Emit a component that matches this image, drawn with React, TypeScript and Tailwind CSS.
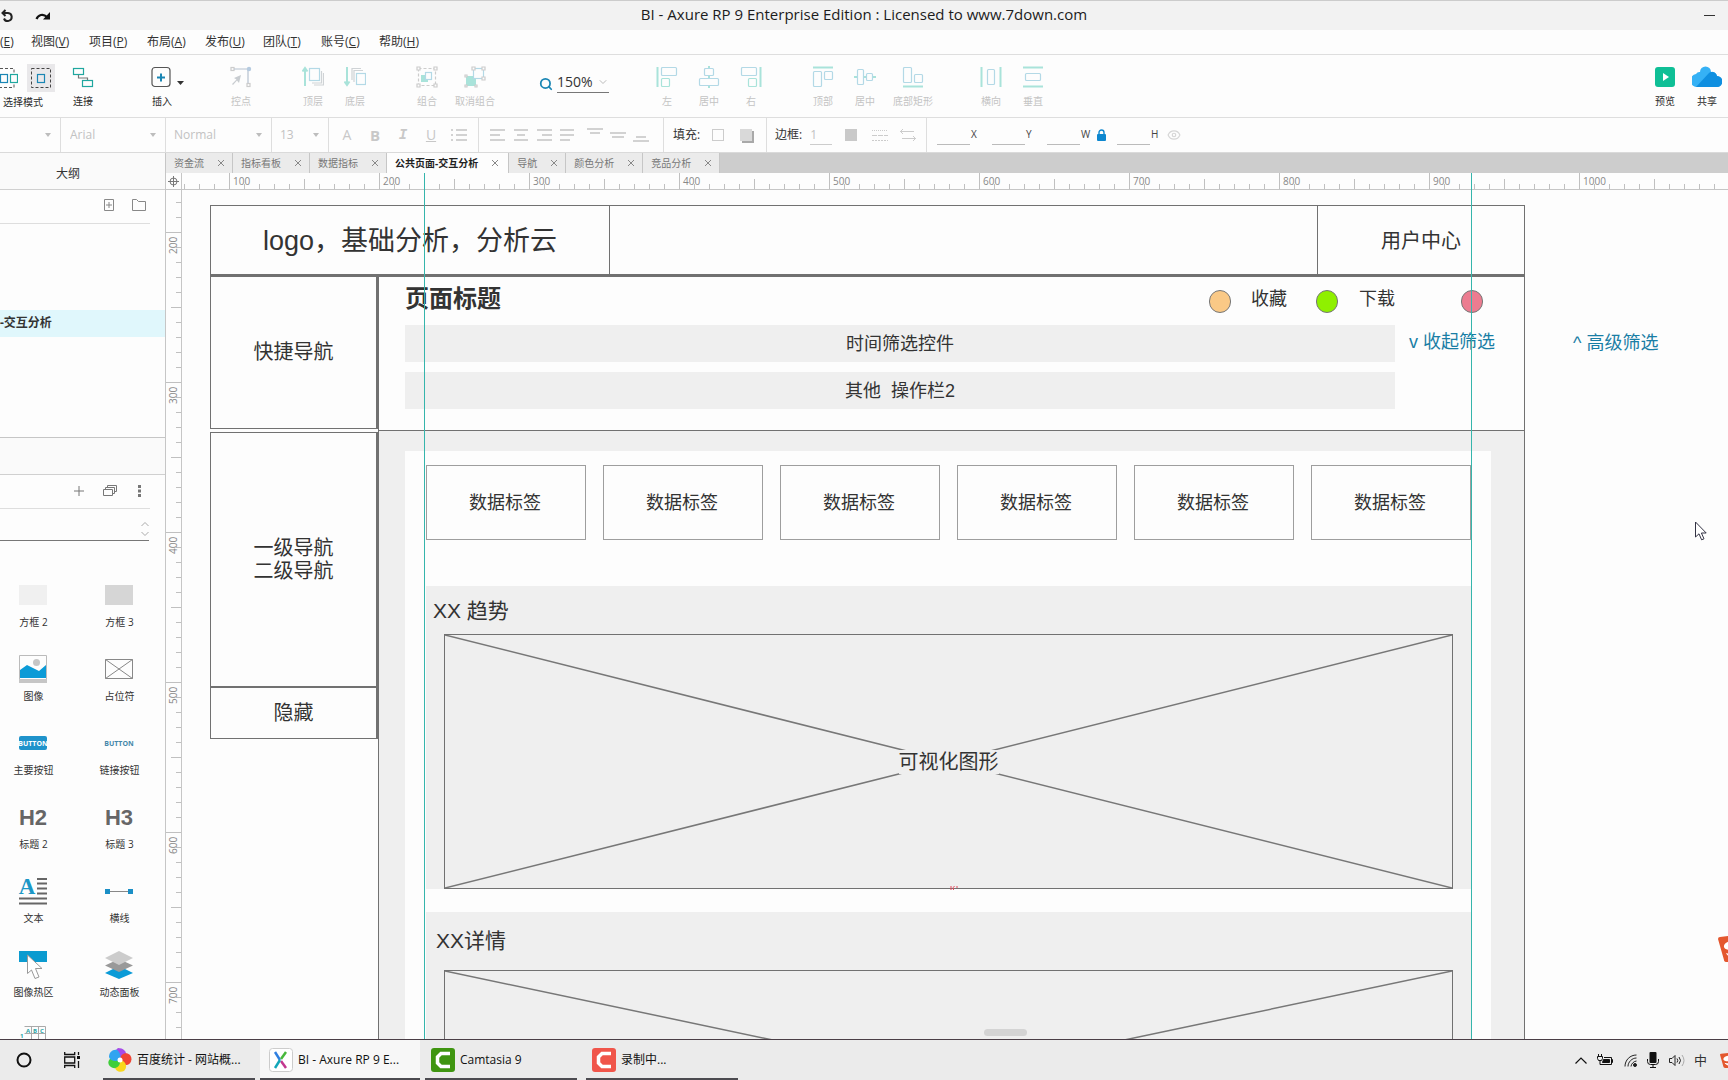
import React from 'react';
import { ChevronDown, ChevronUp, Eye, Search } from 'lucide-react';

const TEAL = '#1fa79f';
const BLUE = '#1a86b4';
const SOFT_TEAL = '#a9e3da';
const SOFT_BLUE = '#b3d9e6';

const menus = [
  ['视图', 'V'],
  ['项目', 'P'],
  ['布局', 'A'],
  ['发布', 'U'],
  ['团队', 'T'],
  ['账号', 'C'],
  ['帮助', 'H'],
];

const tabs = ['资金流', '指标看板', '数据指标', '公共页面-交互分析', '导航', '颜色分析', '竞品分析'];

/* ---------- title and menu ---------- */

const TitleBar: React.FC = () => (
  <header className="relative flex h-[30px] shrink-0 items-center justify-between border-t border-[#cccccc] bg-[#f2f2f2] pr-3">
    <div className="flex items-center gap-[21px]">
      <button aria-label="撤销">
        <svg width="14" height="14" viewBox="0 0 14 14" fill="none" stroke="#222" strokeWidth="2">
          <path d="M3 4h5a4 4 0 1 1-4 5.500M5.500 1 2.500 4l3 3" />
        </svg>
      </button>
      <button aria-label="重做">
        <svg width="16" height="12" viewBox="0 0 16 12">
          <path d="M1.500 9C3 5 8 3 12 7" fill="none" stroke="#111" strokeWidth="2.200" />
          <path d="M15 2v7.500H8z" fill="#111" />
        </svg>
      </button>
    </div>
    <h1 className="pointer-events-none absolute inset-x-0 top-[3px] text-center text-[15px] leading-5 text-[#1c1c1c]">
      BI - Axure RP 9 Enterprise Edition : Licensed to www.7down.com
    </h1>
    <button aria-label="最小化" className="h-3 w-3">
      <span className="block h-px w-[11px] bg-[#333]" />
    </button>
  </header>
);

const MenuBar: React.FC = () => (
  <nav className="flex h-[25px] shrink-0 items-center border-b border-[#dedede] text-[12px] leading-4 text-[#333]">
    <button className="w-[31px] text-left">
      (<u>E</u>)
    </button>
    {menus.map(([name, key]) => (
      <button key={key} className="w-[58px] whitespace-nowrap text-left">
        {name}(<u>{key}</u>)
      </button>
    ))}
  </nav>
);

/* ---------- toolbar ---------- */

interface ToolProps {
  label: string;
  wide?: boolean;
  muted?: boolean;
  children: React.ReactNode;
}

const Tool: React.FC<ToolProps> = ({ label, wide, muted, children }) => (
  <button
    className={`relative flex shrink-0 flex-col items-center gap-[5px] text-[10px] leading-4 ${wide ? 'w-[54px]' : 'w-[42px]'} ${
      muted ? 'text-[#c4c4c4]' : 'text-[#2b2b2b]'
    }`}
  >
    <svg width="22" height="22" viewBox="0 0 22 22" fill="none" strokeWidth="1.200">
      {children}
    </svg>
    <span className="whitespace-nowrap">{label}</span>
  </button>
);

const Toolbar: React.FC = () => (
  <div className="flex h-[63px] shrink-0 items-start border-b border-[#dedede] pt-[11px] text-[10px]">
    <div className="flex w-[62px] shrink-0 flex-col gap-[2px] leading-4 text-[#2b2b2b]">
      <div className="-mt-[2px] flex gap-[9px]">
        <button aria-label="相交选中" className="h-7 w-[18px]">
          <svg width="18" height="28" viewBox="0 0 18 28" fill="none">
            <path d="M0 4.500h14v19H0" stroke="#555" strokeDasharray="3 2" />
            <rect x="0.500" y="10.500" width="7" height="8" stroke={BLUE} strokeWidth="1.200" />
            <rect x="10.500" y="10.500" width="7" height="8" stroke={TEAL} strokeWidth="1.200" fill="#fdfdfd" />
          </svg>
        </button>
        <button aria-label="包含选中" className="h-7 w-7 bg-[#e9e8ea]">
          <svg width="28" height="28" viewBox="0 0 28 28" fill="none">
            <rect x="4.500" y="4.500" width="19" height="19" stroke="#444" strokeDasharray="3 2" />
            <rect x="10.500" y="10.500" width="7" height="8" stroke={BLUE} strokeWidth="1.200" />
          </svg>
        </button>
      </div>
      <span className="pl-[3px]">选择模式</span>
    </div>
    <Tool label="连接">
      <rect x="1.500" y="2.500" width="10" height="6" stroke={TEAL} />
      <rect x="10.500" y="14.500" width="10" height="6" stroke={TEAL} />
      <path d="M6.500 9v3h9v2" stroke="#777" />
    </Tool>
    <div className="relative ml-[37px] mr-[37px]">
      <Tool label="插入">
        <rect x="1" y="1.500" width="18" height="19" rx="3" stroke="#555" />
        <path d="M10 7.500v8M6 11.500h8" stroke={BLUE} strokeWidth="2" />
      </Tool>
      <svg width="7" height="4" viewBox="0 0 7 4" className="absolute left-9 top-[15px]">
        <path d="M0 0h7L3.500 4z" fill="#333" />
      </svg>
    </div>
    <div className="flex gap-[30px]">
      <Tool label="控点" muted>
        <rect x="1" y="1.500" width="3" height="3" stroke="#ccc" />
        <path d="M4 3h14v15" stroke="#b6c2d0" />
        <circle cx="19" cy="3" r="2.200" fill="#b6cbe0" />
        <rect x="17" y="17.500" width="3" height="3" stroke="#ccc" />
        <path d="m11 9-2 8-2-2.500-4 4.500-1-1 4.500-4.500L4 12z" fill="#c8ccd0" />
      </Tool>
      <div className="flex">
        <Tool label="顶层" muted>
          <path d="M3 20V3M0.500 5.500 3 2l2.500 3.500" stroke={SOFT_TEAL} strokeWidth="2" />
          <rect x="7.500" y="2.500" width="10" height="12" stroke={SOFT_BLUE} />
          <path d="M19.500 5v12H10M21.500 7v12H12" stroke="#cfd3d6" />
        </Tool>
        <Tool label="底层" muted>
          <path d="M3 1v17M0.500 15.500 3 19l2.500-3.500" stroke={SOFT_TEAL} strokeWidth="2" />
          <path d="M8 14V2.500h9M10 16V4.500h9" stroke="#cfd3d6" />
          <rect x="12.500" y="7.500" width="9" height="11" stroke={SOFT_BLUE} />
        </Tool>
      </div>
      <div className="flex">
        <Tool label="组合" muted>
          <rect x="2.500" y="2.500" width="17" height="17" stroke="#ccc" strokeDasharray="3 2" />
          <rect x="5" y="9" width="7" height="7" fill={SOFT_TEAL} />
          <rect x="9.500" y="6.500" width="6" height="7" stroke={SOFT_BLUE} fill="#fdfdfd" />
          <path d="M1 1h3v3H1zM18 1h3v3h-3zM1 18h3v3H1zM18 18h3v3h-3z" stroke="#ccc" fill="#fdfdfd" />
        </Tool>
        <Tool label="取消组合" muted wide>
          <rect x="2" y="10" width="10" height="10" fill={SOFT_TEAL} />
          <rect x="9.500" y="2.500" width="10" height="10" stroke={SOFT_BLUE} fill="#fdfdfd" />
          <path d="M8 1h3v3H8zM18 1h3v3h-3zM18 11h3v3h-3zM1 9h2v2H1zM1 19h2v2H1zM11 19h2v2h-2z" stroke="#ccc" fill="#fdfdfd" />
        </Tool>
      </div>
    </div>
    <div className="mx-[37px] flex h-[27px] shrink-0 items-end">
      <Search size={14} strokeWidth={3} color={BLUE} className="mb-[2px] mr-1" />
      <label className="flex w-[52px] items-center border-b border-[#777]">
        <input aria-label="缩放" defaultValue="150%" className="w-10 bg-transparent text-[14px] leading-5 text-[#333] outline-none" />
        <ChevronDown size={12} color="#bbb" />
      </label>
    </div>
    <div className="flex gap-[30px]">
      <div className="flex">
        <Tool label="左" muted>
          <path d="M1.500 1v20" stroke={SOFT_TEAL} strokeWidth="2" />
          <rect x="5.500" y="1.500" width="15" height="8" rx="1" stroke={SOFT_BLUE} />
          <rect x="5.500" y="12.500" width="8" height="8" rx="1" stroke={SOFT_TEAL} />
        </Tool>
        <Tool label="居中" muted>
          <path d="M11 0v3M11 10v2M11 19v3" stroke={SOFT_TEAL} strokeWidth="2" />
          <rect x="6.500" y="2.500" width="9" height="7" rx="1" stroke={SOFT_BLUE} />
          <rect x="1.500" y="12.500" width="19" height="7" rx="1" stroke={SOFT_BLUE} />
        </Tool>
        <Tool label="右" muted>
          <path d="M20.500 1v20" stroke={SOFT_TEAL} strokeWidth="2" />
          <rect x="1.500" y="1.500" width="15" height="8" rx="1" stroke={SOFT_BLUE} />
          <rect x="8.500" y="12.500" width="8" height="8" rx="1" stroke={SOFT_TEAL} />
        </Tool>
      </div>
      <div className="flex">
        <Tool label="顶部" muted>
          <path d="M1 1.500h20" stroke={SOFT_TEAL} strokeWidth="2" />
          <rect x="1.500" y="5.500" width="8" height="15" rx="1" stroke={SOFT_BLUE} />
          <rect x="12.500" y="5.500" width="8" height="8" rx="1" stroke={SOFT_BLUE} />
        </Tool>
        <Tool label="居中" muted>
          <path d="M0 11h3M10 11h2M19 11h3" stroke={SOFT_TEAL} strokeWidth="2" />
          <rect x="3.500" y="3.500" width="6" height="15" rx="1" stroke={SOFT_BLUE} />
          <rect x="12.500" y="7.500" width="6" height="7" rx="1" stroke={SOFT_BLUE} />
        </Tool>
        <Tool label="底部矩形" muted wide>
          <path d="M1 20.500h20" stroke={SOFT_TEAL} strokeWidth="2" />
          <rect x="1.500" y="1.500" width="8" height="15" rx="1" stroke={SOFT_BLUE} />
          <rect x="12.500" y="8.500" width="8" height="8" rx="1" stroke={SOFT_BLUE} />
        </Tool>
      </div>
      <div className="flex">
        <Tool label="横向" muted>
          <path d="M1.500 1v20M20.500 1v20" stroke={SOFT_TEAL} strokeWidth="2" />
          <rect x="7.500" y="3.500" width="7" height="15" rx="1" stroke={SOFT_BLUE} />
        </Tool>
        <Tool label="垂直" muted>
          <path d="M1 1.500h20M1 20.500h20" stroke={SOFT_TEAL} strokeWidth="2" />
          <rect x="3.500" y="7.500" width="15" height="7" rx="1" stroke={SOFT_BLUE} />
        </Tool>
      </div>
    </div>
    <div className="ml-auto flex">
      <Tool label="预览">
        <rect x="1" y="1" width="20" height="20" rx="3" fill="#0fbf96" />
        <path d="M9 7v8l6-4z" fill="#fff" />
      </Tool>
      <button className="flex w-[42px] flex-col items-center gap-[5px] leading-4 text-[#2b2b2b]">
        <svg width="30" height="22" viewBox="0 0 30 22">
          <path d="M6 21a6 6 0 0 1-2-13 4 4 0 0 1 4-2 5.500 5.500 0 0 1 11 0 5 5 0 0 1 6 4 5.500 5.500 0 0 1-1 11z" fill="#35b1f5" />
          <path d="M4 21 17 7a5 5 0 0 1 8 3 5.500 5.500 0 0 1 0 11z" fill="#0f8fe0" />
        </svg>
        <span>共享</span>
      </button>
    </div>
  </div>
);

/* ---------- format bar ---------- */

interface PickerProps {
  name: string;
  value: string;
  className: string;
}

const Picker: React.FC<PickerProps> = ({ name, value, className }) => (
  <label className={`flex h-full shrink-0 items-center justify-between border-r border-[#dedede] pr-[9px] ${className}`}>
    <select aria-label={name} className="min-w-0 flex-1 appearance-none bg-transparent text-[12px] text-[#c2c2c2] outline-none">
      <option>{value}</option>
    </select>
    <svg width="6" height="4" viewBox="0 0 6 4">
      <path d="M0 0h6L3 4z" fill="#bdbdbd" />
    </svg>
  </label>
);

const Bars: React.FC<{ name: string; d: string }> = ({ name, d }) => (
  <button aria-label={name}>
    <svg width="16" height="16" viewBox="0 0 16 16" stroke="#d2d2d2" strokeWidth="2" fill="none" className="block">
      <path d={d} />
    </svg>
  </button>
);

const Coord: React.FC<{ name: string }> = ({ name }) => (
  <label className="flex items-end text-[10px] leading-4 text-[#444]">
    <input className="mr-[1px] h-5 w-[33px] border-b border-[#bbb] bg-transparent outline-none" />
    <span className="w-[10px] pb-[3px]">{name}</span>
  </label>
);

const FormatBar: React.FC = () => (
  <div className="flex h-[35px] shrink-0 items-center border-b border-[#dadada]">
    <Picker name="样式" value="" className="w-[61px]" />
    <Picker name="字体" value="Arial" className="w-[105px] pl-[9px]" />
    <Picker name="字型" value="Normal" className="w-[106px] pl-2" />
    <Picker name="字号" value="13" className="w-[57px] pl-2" />
    <div className="flex h-full w-[150px] shrink-0 items-center justify-between border-r border-[#dedede] pl-[10px] pr-[11px] text-[14px] leading-4 text-[#c8c8c8]">
      <button className="w-4">A</button>
      <button className="w-4 text-[15px] font-bold">B</button>
      <button className="w-4 font-['Liberation_Mono',monospace] font-bold italic">I</button>
      <button className="w-4 underline">U</button>
      <Bars name="列表" d="M0 3h2M5 3h11M0 8h2M5 8h11M0 13h2M5 13h11" />
    </div>
    <div className="flex h-full w-[185px] shrink-0 items-center gap-[7px] border-r border-[#dedede] pl-[11px]">
      <Bars name="左对齐" d="M0 3h15M0 8h10M0 13h15" />
      <Bars name="居中对齐" d="M1 3h14M4 8h8M1 13h14" />
      <Bars name="右对齐" d="M1 3h15M6 8h10M1 13h15" />
      <Bars name="两端对齐" d="M1 3h14M1 8h14M1 13h10" />
      <div className="ml-[5px] flex gap-[7px]">
        <Bars name="顶端" d="M0 2h16M3 6h10" />
        <Bars name="中部" d="M0 6h16M2 10h12" />
        <Bars name="底端" d="M3 10h10M0 14h16" />
      </div>
    </div>
    <div className="flex h-full w-[103px] shrink-0 items-center border-r border-[#dedede] pl-[9px] text-[12px] leading-4 text-[#333]">
      填充:
      <button aria-label="填充颜色" className="ml-3 h-3 w-3 border border-[#ccc]" />
      <button aria-label="阴影" className="ml-4 h-3 w-3 bg-[#d9d9d9] shadow-[2px_2px_0_#a9a9a9]" />
    </div>
    <div className="flex h-full w-[160px] shrink-0 items-center border-r border-[#dedede] pl-2 text-[12px] leading-4 text-[#333]">
      边框:
      <input aria-label="线宽" defaultValue="1" className="ml-2 h-5 w-[22px] border-b border-[#ccc] bg-transparent text-[#c2c2c2] outline-none" />
      <button aria-label="线条颜色" className="ml-[13px] h-3 w-3 bg-[#c9c9c9]" />
      <button aria-label="线型" className="ml-[15px]">
        <svg width="16" height="12" viewBox="0 0 16 12" stroke="#ccc" fill="none">
          <path d="M0 1.500h16" strokeDasharray="1 1" />
          <path d="M0 6.500h16" strokeDasharray="5 1" />
          <path d="M0 11.500h16" strokeDasharray="2 1" />
        </svg>
      </button>
      <button aria-label="箭头" className="ml-3">
        <svg width="16" height="12" viewBox="0 0 16 12" stroke="#ccc" fill="none">
          <path d="M0 2.500h14M3 0 0.500 2.500l2.500 2.500M2 9.500h14M13 7l2.500 2.500L13 12" />
        </svg>
      </button>
    </div>
    <div className="flex shrink-0 items-center gap-[11px] pl-[10px]">
      <Coord name="X" />
      <Coord name="Y" />
      <div className="flex items-center gap-[6px]">
        <Coord name="W" />
        <button aria-label="锁定比例">
          <svg width="9" height="12" viewBox="0 0 9 12" className="block">
            <path d="M2 5V3.500a2.500 2.500 0 0 1 5 0V5" fill="none" stroke="#0d87cf" strokeWidth="1.400" />
            <rect y="5" width="9" height="7" rx="1" fill="#0d87cf" />
          </svg>
        </button>
      </div>
      <div className="flex items-center gap-[6px]">
        <Coord name="H" />
        <Eye size={14} color="#d6d6d6" />
      </div>
    </div>
  </div>
);

/* ---------- left panel ---------- */

const LibItem: React.FC<{ label: string; children: React.ReactNode }> = ({ label, children }) => (
  <li className="flex h-[74px] flex-col items-center gap-[5px]">
    <svg width="28" height="28" viewBox="0 0 28 28" fill="none" className="shrink-0 overflow-visible">
      {children}
    </svg>
    <span className="whitespace-nowrap pl-[1px] text-[10px] leading-4 text-[#333]">{label}</span>
  </li>
);

const Sidebar: React.FC = () => (
  <aside className="flex w-[166px] shrink-0 flex-col overflow-hidden border-r border-[#c6c6c6] text-[12px] leading-4 text-[#333]">
    <h2 className="flex h-[37px] shrink-0 items-center justify-center border-b border-[#d0d0d0] bg-[#fafafa] pr-[29px] pt-[6px]">大纲</h2>
    <div className="mr-[15px] flex h-[34px] shrink-0 items-center justify-end gap-[18px] border-b border-[#dedede] pb-1 pr-1">
      <button aria-label="添加页面">
        <svg width="10" height="12" viewBox="0 0 10 12" fill="none" stroke="#888">
          <path d="M0.500 0.500h9v11h-9zM5 3v6M2 6h6" />
        </svg>
      </button>
      <button aria-label="添加文件夹">
        <svg width="14" height="12" viewBox="0 0 14 12" fill="none" stroke="#888">
          <path d="M0.500 0.500h4l2 2h7v9H0.500z" />
        </svg>
      </button>
    </div>
    <div className="h-[214px] shrink-0 border-b border-[#c6c6c6] pt-[86px]">
      <p className="flex h-[27px] items-center bg-[#e0f7fc] pb-[1px] font-bold">-交互分析</p>
    </div>
    <div className="h-[37px] shrink-0 border-b border-[#d0d0d0] bg-[#fafafa]" />
    <div className="mr-[15px] flex h-[34px] shrink-0 items-center justify-end border-b border-[#dedede] pb-[2px] pr-[9px]">
      <button aria-label="添加母版" className="mr-[19px]">
        <svg width="10" height="10" viewBox="0 0 10 10" stroke="#777">
          <path d="M5 0v10M0 5h10" />
        </svg>
      </button>
      <button aria-label="元件库" className="mr-[21px]">
        <svg width="14" height="11" viewBox="0 0 14 11" fill="none" stroke="#777">
          <path d="M0.500 4.500h9v6h-9zM2.500 4V2.500h9v6H10M4.500 2V0.500h9v6H12" />
        </svg>
      </button>
      <button aria-label="更多">
        <svg width="3" height="12" viewBox="0 0 3 12" fill="#777">
          <path d="M0 0h3v3H0zM0 4.500h3v3H0zM0 9h3v3H0z" />
        </svg>
      </button>
    </div>
    <label className="mr-4 flex h-8 shrink-0 items-center justify-end border-b border-[#777]">
      <select aria-label="选择元件库" className="min-w-0 flex-1 appearance-none bg-transparent outline-none">
        <option></option>
      </select>
      <svg width="8" height="14" viewBox="0 0 8 14" fill="none" stroke="#aaa" className="mt-2">
        <path d="M0.500 4 4 0.500 7.500 4M0.500 10 4 13.500 7.500 10" />
      </svg>
    </label>
    <div className="flex shrink-0 justify-end pr-[3px] pt-10">
      <ul className="grid w-[172px] shrink-0 grid-cols-2">
        <LibItem label="方框 2">
          <path d="M0 4h28v20H0z" fill="#f0f0f0" />
        </LibItem>
        <LibItem label="方框 3">
          <path d="M0 4h28v20H0z" fill="#d6d6d6" />
        </LibItem>
        <LibItem label="图像">
          <path d="M0.500 0.500h27v24h-27z" stroke="#bbb" />
          <path d="M0 24h28v4H0z" fill="#c6c6c6" />
          <circle cx="17.500" cy="7.500" r="3.500" fill="#c6c6c6" />
          <path d="M1 15 8 10l12 6 7-6v13H1z" fill="#0b9bd7" />
        </LibItem>
        <LibItem label="占位符">
          <path d="M0.500 4.500h27v19h-27zM0.500 4.500l27 19M27.500 4.500l-27 19" stroke="#888" />
        </LibItem>
        <LibItem label="主要按钮">
          <rect y="7" width="28" height="14" rx="2" fill="#1f93cb" />
          <text x="14" y="17" textAnchor="middle" fontSize="7" fontWeight="700" fill="#fff">BUTTON</text>
        </LibItem>
        <LibItem label="链接按钮">
          <text x="14" y="17" textAnchor="middle" fontSize="7" fontWeight="700" fill="#4488aa">BUTTON</text>
        </LibItem>
        <LibItem label="标题 2">
          <text x="14" y="22" textAnchor="middle" fontSize="22" fontWeight="700" fontFamily="Liberation Sans, sans-serif" fill="#666">H2</text>
        </LibItem>
        <LibItem label="标题 3">
          <text x="14" y="22" textAnchor="middle" fontSize="22" fontWeight="700" fontFamily="Liberation Sans, sans-serif" fill="#666">H3</text>
        </LibItem>
        <LibItem label="文本">
          <text x="8" y="17" textAnchor="middle" fontSize="23" fontWeight="700" fontFamily="Liberation Serif, serif" fill="#1b97c6">A</text>
          <path d="M18 2h10M18 6.500h10M18 11.500h10M18 16.500h10M0 21.500h28M0 26.500h28" stroke="#666" strokeWidth="2" />
        </LibItem>
        <LibItem label="横线">
          <path d="M3 14.500h22" stroke="#888" />
          <path d="M0 12h5v5H0zM23 12h5v5h-5z" fill="#1b8fc6" />
        </LibItem>
        <LibItem label="图像热区">
          <path d="M0 0h28v11H0z" fill="#0b9bd0" />
          <path d="M8.500 4v18.500l4-3.500 3.500 8.500 4-1.500-3.500-8.500h6.500z" fill="#fff" stroke="#999" />
        </LibItem>
        <LibItem label="动态面板">
          <path d="M0 22 14 15l14 7-14 6z" fill="#0b9bd7" />
          <path d="M0 14.500 14 8l14 6.500L14 21z" fill="#999" />
          <path d="M0 7 14 0l14 7-14 7z" fill="#ccc" />
        </LibItem>
        <LibItem label="">
          <path d="M5.500 1.500h21v20h-21M12.500 1.500v20M19.500 1.500v20M5.500 8.500h21M5.500 15.500h21" stroke="#aaa" />
          <text x="7" y="7.500" fontSize="6" fontWeight="700" fill="#2aa6a6">A</text>
          <text x="14" y="7.500" fontSize="6" fontWeight="700" fill="#2aa6a6">B</text>
          <text x="21" y="7.500" fontSize="6" fontWeight="700" fill="#2aa6a6">C</text>
          <text x="1" y="13" fontSize="6" fontWeight="700" fill="#2aa6a6">1</text>
        </LibItem>
      </ul>
    </div>
  </aside>
);

/* ---------- tabs and rulers ---------- */

const TabStrip: React.FC = () => (
  <div className="flex h-5 shrink-0 bg-[#cdcdcd] text-[10px] leading-4">
    {tabs.map((name, i) => (
      <div
        key={name}
        className={`flex items-center gap-[13px] border-r border-[#c6c6c6] pl-2 ${
          i === 3 ? 'bg-[#fdfdfd] pr-[9px] font-bold text-[#222]' : 'bg-[#ebebeb] pr-[7px] text-[#777]'
        }`}
      >
        <button className="whitespace-nowrap">{name}</button>
        <button aria-label="关闭">
          <svg width="8" height="8" viewBox="0 0 8 8" stroke="#888" className="block">
            <path d="m1 1 6 6M7 1 1 7" />
          </svg>
        </button>
      </div>
    ))}
  </div>
);

const tickLength = (i: number) => (i % 10 === 0 ? 16 : i % 5 === 0 ? 10 : 5);

const HorizontalRuler: React.FC = () => (
  <svg height="16" className="block w-full" fontSize="10" fill="#888">
    {Array.from({ length: 160 }, (_, i) => i - 3).map((i) => (
      <path key={i} d={`M${i * 15 + 47.5} 16v-${tickLength(Math.abs(i))}`} stroke="#c0c0c0" />
    ))}
    {Array.from({ length: 10 }, (_, i) => (
      <text key={i} x={i * 150 + 51} y="12">
        {(i + 1) * 100}
      </text>
    ))}
  </svg>
);

const VerticalRuler: React.FC = () => (
  <svg width="15" className="block h-full" fontSize="10" fill="#888">
    {Array.from({ length: 120 }, (_, i) => i - 2).map((i) => (
      <path key={i} d={`M15 ${i * 15 + 42.5}h-${tickLength(Math.abs(i))}`} stroke="#c0c0c0" />
    ))}
    {Array.from({ length: 6 }, (_, i) => (
      <text key={i} transform={`translate(11 ${i * 150 + 64}) rotate(-90)`}>
        {(i + 2) * 100}
      </text>
    ))}
  </svg>
);

/* ---------- canvas ---------- */

const Dot: React.FC<{ className: string }> = ({ className }) => (
  <span className={`mt-[3px] h-[23px] w-[22px] rounded-full border border-[#777] ${className}`} />
);

const Placeholder: React.FC<{ className: string; label: string }> = ({ className, label }) => (
  <div className={`relative mx-[18px] flex items-center justify-center border border-[#717171] ${className}`}>
    <svg className="absolute inset-0 h-full w-full" viewBox="0 0 100 100" preserveAspectRatio="none" stroke="#777">
      <path d="M0 0 100 100M100 0 0 100" vectorEffect="non-scaling-stroke" strokeWidth="1.500" />
    </svg>
    <span className="relative bg-[#efefef] text-[20px] leading-6">{label}</span>
  </div>
);

const Artboard: React.FC = () => (
  <div className="absolute left-7 top-[15px] w-[1315px] font-['Liberation_Sans','Noto_Sans_CJK_SC',sans-serif] text-[#333]">
    <div className="flex h-[71px] border border-b-2 border-[#717171] leading-8">
      <div className="flex w-[399px] items-center justify-center border-r border-[#717171] pt-[2px] text-[27px]">logo，基础分析，分析云</div>
      <div className="flex-1" />
      <div className="flex w-[207px] items-center justify-center border-l border-[#717171] pt-[2px] text-[20px]">用户中心</div>
    </div>
    <div className="flex">
      <div className="w-[168px] shrink-0 text-center text-[20px] leading-[23px]">
        <div className="mb-[3px] flex h-[153px] items-center justify-center border border-r-2 border-[#717171]">快捷导航</div>
        <div className="flex h-[255px] items-center justify-center border border-r-2 border-[#717171]">
          一级导航
          <br />
          二级导航
        </div>
        <div className="flex h-[52px] items-center justify-center border border-r-2 border-[#717171]">隐藏</div>
      </div>
      <div className="flex-1 border border-[#717171]">
        <div className="h-[154px] border-b border-[#717171] pl-[26px]">
          <div className="flex h-12 items-start pr-[41px] pt-[10px] text-[18px] leading-6">
            <h3 className="mr-auto text-[24px] font-bold">页面标题</h3>
            <Dot className="mr-5 bg-[#fac986]" />
            <span className="mr-[29px]">收藏</span>
            <Dot className="mr-[21px] bg-[#8ff000]" />
            <span className="mr-[66px]">下载</span>
            <Dot className="bg-[#ec7c90]" />
          </div>
          <div className="flex items-start gap-[14px] text-[18px] leading-6">
            <div className="flex h-[37px] w-[990px] items-center justify-center bg-[#efefef]">时间筛选控件</div>
            <a href="#" className="whitespace-nowrap pt-[5px] text-[#1a7ea5]">v 收起筛选</a>
          </div>
          <div className="mt-[10px] flex h-[37px] w-[990px] items-center justify-center whitespace-pre bg-[#efefef] text-[18px] leading-6">
            {'其他  操作栏2'}
          </div>
        </div>
        <div className="bg-[#efefef] pl-[26px] pr-[33px] pt-5">
          <div className="bg-[#fdfdfd] pl-[21px] pr-5 pt-[14px]">
            <div className="grid grid-cols-6 gap-[17px] text-[18px] leading-6">
              {Array.from({ length: 6 }, (_, i) => (
                <div key={i} className="flex h-[75px] items-center justify-center border border-[#9e9e9e] pr-[2px]">
                  数据标签
                </div>
              ))}
            </div>
            <section className="mt-[46px] bg-[#efefef] pt-[11px]">
              <h4 className="mb-[9px] pl-[7px] text-[21px] leading-7">XX 趋势</h4>
              <Placeholder className="h-[255px]" label="可视化图形" />
            </section>
            <section className="mt-[23px] bg-[#efefef] pt-[15px]">
              <h4 className="mb-[15px] pl-[10px] text-[21px] leading-7">XX详情</h4>
              <Placeholder className="h-[214px]" label="" />
            </section>
          </div>
        </div>
      </div>
    </div>
  </div>
);

const Sogou: React.FC<{ className: string }> = ({ className }) => (
  <svg width="28" height="28" viewBox="0 0 28 28" className={className}>
    <path d="M0 5Q0 3 2 3L28 0v28H9q-3 0-3-2z" fill="#e4572e" />
    <path d="M28 6C14 5 5 8 6 13c1 3 6 4 22 3V12c-6 0-14 1-14-1s8-2 14-2zM8 19c2 1 8 1 20 0v6c-10 0-18-1-20-6z" fill="#fff" />
  </svg>
);

const Workspace: React.FC = () => (
  <main className="flex min-w-0 flex-1 flex-col">
    <TabStrip />
    <div className="relative flex min-h-0 flex-1 flex-col">
      <div className="flex h-[17px] shrink-0 border-b border-[#c6c6c6]">
        <div className="flex w-4 shrink-0 items-center justify-center border-r border-[#c6c6c6]">
          <svg width="11" height="11" viewBox="0 0 11 11" fill="none" stroke="#777">
            <circle cx="5.500" cy="5.500" r="3.500" />
            <path d="M5.500 0v11M0 5.500h11" />
          </svg>
        </div>
        <div className="min-w-0 flex-1 overflow-hidden">
          <HorizontalRuler />
        </div>
      </div>
      <div className="flex min-h-0 flex-1">
        <div className="w-4 shrink-0 overflow-hidden border-r border-[#c6c6c6]">
          <VerticalRuler />
        </div>
        <div className="relative min-w-0 flex-1 overflow-hidden">
          <Artboard />
          <a href="#" className="absolute left-[1391px] top-[141px] whitespace-nowrap font-['Liberation_Sans','Noto_Sans_CJK_SC',sans-serif] text-[18px] leading-6 text-[#1a7ea5]">
            ^ 高级筛选
          </a>
          <svg width="8" height="4" viewBox="0 0 8 4" className="absolute left-[768px] top-[696px]" stroke="#e0485a" fill="none">
            <path d="M1 0v4M3.500 4q-1-3 1-4M7 0v2" />
          </svg>
          <svg width="12" height="20" viewBox="0 0 12 20" className="absolute left-[1513px] top-[331px]">
            <path d="M0.500 1v15l3.500-3.200 2.600 6 2.400-1-2.600-5.800h4.800z" fill="#fff" stroke="#334" />
          </svg>
          <Sogou className="absolute left-[1536px] top-[744px]" />
          <div className="absolute bottom-[3px] left-[802px] h-[7px] w-[43px] rounded bg-[#d4d4d4]" />
        </div>
      </div>
      <div className="absolute inset-y-0 left-[258px] w-px bg-[#35b5ac]" />
      <div className="absolute inset-y-0 left-[1305px] w-px bg-[#35b5ac]" />
    </div>
  </main>
);

/* ---------- taskbar ---------- */

const TaskButton: React.FC<{ label: string; className: string; children: React.ReactNode }> = ({ label, className, children }) => (
  <button className={`flex h-full shrink-0 items-center gap-[5px] border-b-2 border-[#4c4b50] pt-[2px] text-[12px] leading-4 text-[#111] ${className}`}>
    <svg width="24" height="24" viewBox="0 0 24 24" fill="none">
      {children}
    </svg>
    <span className="whitespace-nowrap">{label}</span>
  </button>
);

const Taskbar: React.FC = () => (
  <footer className="flex h-[41px] shrink-0 items-center border-t border-[#4a3e46] bg-[#ebebeb]">
    <button aria-label="Cortana" className="ml-4">
      <svg width="16" height="16" viewBox="0 0 16 16" fill="none" className="block">
        <circle cx="8" cy="8" r="6.500" stroke="#111" strokeWidth="2" />
      </svg>
    </button>
    <button aria-label="任务视图" className="ml-8">
      <svg width="16" height="16" viewBox="0 0 16 16" fill="none" stroke="#111" strokeWidth="1.300" className="block">
        <path d="M0.700 0v2.500h10V0M0.700 5h10v6h-10zM0.700 16v-2.500h10V16M14.500 0v3M14.500 9v7" />
        <path d="M13 4h3v3h-3z" fill="#111" stroke="none" />
      </svg>
    </button>
    <div className="ml-[23px] flex h-full gap-[5px]">
      <TaskButton label="百度统计 - 网站概..." className="w-[152px] pl-[5px]">
        <path d="M12 12C6 12 5 3 10 0c5 0 9 3 8 8-2 3-4 4-6 4z" fill="#a64be8" />
        <path d="M12 12c0-6 6-9 10-5 3 4 1 9-3 10-4 0-7-2-7-5z" fill="#f04434" />
        <path d="M12 12c6 1 8 7 4 11-4 2-9 0-9-4 0-3 2-6 5-7z" fill="#f9d71c" />
        <path d="M12 12c1 5-3 9-7 8-5-2-6-6-3-9 3-2 7-2 10 1z" fill="#3fce3a" />
        <path d="M12 12C8 14 2 13 1 9c0-5 4-8 8-7 3 2 4 6 3 10z" fill="#31a4f0" />
        <circle cx="12" cy="12" r="2.500" fill="#fff" />
      </TaskButton>
      <TaskButton label="BI - Axure RP 9 E..." className="w-[160px] bg-[#f7f7f7] pl-[9px]">
        <rect x="0.500" y="0.500" width="23" height="23" rx="3" fill="#fff" stroke="#ccc" />
        <path d="m6 4 5 8" stroke="#2f7fe0" strokeWidth="2.500" />
        <path d="m12 13 5 7" stroke="#c2388f" strokeWidth="2.500" />
        <path d="m17 4-5 7" stroke="#48b83c" strokeWidth="2.500" />
        <path d="m11 12-5 8" stroke="#12a6b8" strokeWidth="2.500" />
      </TaskButton>
      <TaskButton label="Camtasia 9" className="w-[152px] pl-[6px]">
        <rect width="24" height="24" rx="3" fill="#3f9510" />
        <path d="M19 5.500H10L6.500 9v6l3.500 3.500h9" stroke="#fff" strokeWidth="3.500" />
      </TaskButton>
      <TaskButton label="录制中..." className="ml-1 w-[152px] pl-[6px]">
        <rect width="24" height="24" rx="3" fill="#f0554a" />
        <path d="M19 5.500H10L6.500 9v6l3.500 3.500h9" stroke="#fff" strokeWidth="3.500" />
      </TaskButton>
    </div>
    <div className="ml-auto flex shrink-0 items-center">
      <svg width="12" height="7" viewBox="0 0 12 7" fill="none" stroke="#111" strokeWidth="1.200" className="mr-[10px]">
        <path d="M0.500 6.500 6 1l5.500 5.500" />
      </svg>
      <svg width="16" height="12" viewBox="0 0 16 12" fill="none" stroke="#111" className="mr-[11px]">
        <path d="M1.500 0v2M4.500 0v2M0.500 2.500h5v2l-1 2h-3l-1-2zM3 6v4.500M3 10.500h11.500v-7H7M14.500 5.500h1v3h-1" />
        <path d="M6.500 5.500h6v3h-7z" fill="#111" />
      </svg>
      <svg width="13" height="13" viewBox="0 0 13 13" fill="none" stroke="#222" className="mr-[10px]">
        <path d="M1 12.500C1 6 6 1 12.500 1M4 12.500C4 8 8 4 12.500 4M7 12.500C7 10 10 7 12.500 7" />
        <circle cx="11" cy="11" r="1.500" fill="#222" />
      </svg>
      <svg width="12" height="16" viewBox="0 0 12 16" fill="none" className="mr-[10px]">
        <rect x="2.500" width="7" height="11" rx="1" fill="#111" />
        <path d="M0.500 7v2.500q0 3 3 3h5q3 0 3-3V7M6 12.500V15M3 15.500h6" stroke="#111" />
      </svg>
      <svg width="16" height="13" viewBox="0 0 16 13" fill="none" stroke="#222" className="mr-[9px]">
        <path d="M0.500 4.500h2.500L6 1.500v10L3 8.500H0.500zM8 4.500q1.500 2 0 4M10 3q3 3.500 0 7" />
        <path d="M13 1q4 5.500 0 11" stroke="#aaa" />
      </svg>
      <span className="mr-[13px] text-[13px] leading-4 text-[#333]">中</span>
      <div className="w-2 overflow-hidden">
        <Sogou className="h-4 w-4" />
      </div>
    </div>
  </footer>
);

const App: React.FC = () => {
  return (
    <div className="flex h-screen flex-col overflow-hidden bg-[#fdfdfd] font-['Open_Sans','Noto_Sans_CJK_SC',sans-serif]">
      <TitleBar />
      <MenuBar />
      <Toolbar />
      <FormatBar />
      <div className="flex min-h-0 flex-1">
        <Sidebar />
        <Workspace />
      </div>
      <Taskbar />
    </div>
  );
};

export default App;
